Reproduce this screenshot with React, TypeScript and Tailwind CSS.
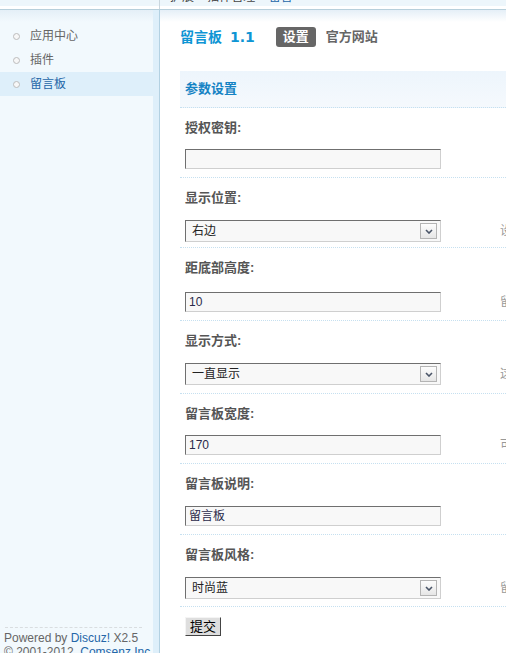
const SIDE = [
  { name: '应用中心', active: false },
  { name: '插件', active: false },
  { name: '留言板', active: true },
]

const ROWS = [
  { label: '授权密钥:', kind: 'input', value: '', h: 'h-[70px]', mt: 'mt-[2px]', tip: '' },
  { label: '显示位置:', kind: 'select', value: '右边', h: 'h-[70px]', mt: 'mt-[3px]', tip: '设置留言板在页面中的位置' },
  { label: '距底部高度:', kind: 'input', value: '10', h: 'h-[73px]', mt: 'mt-[5px]', tip: '留言板距离页面底部的高度' },
  { label: '显示方式:', kind: 'select', value: '一直显示', h: 'h-[73px]', mt: 'mt-[3px]', tip: '这里设置留言板的显示方式' },
  { label: '留言板宽度:', kind: 'input', value: '170', h: 'h-[70px]', mt: 'mt-[2px]', tip: '可以设置留言板宽度' },
  { label: '留言板说明:', kind: 'input', value: '留言板', h: 'h-[71px]', mt: 'mt-[3px]', tip: '' },
  { label: '留言板风格:', kind: 'select', value: '时尚蓝', h: 'h-[72px]', mt: 'mt-[3px]', tip: '留言板风格' },
]

function FakeSelect({ value }: { value: string }) {
  return (
    <div className="relative w-[256px] h-[22px] bg-[#f8f8f8] border border-t-[#6f6f6f] border-l-[#6f6f6f] border-b-[#cfcfcf] border-r-[#cfcfcf] flex items-center pl-[6px] text-[12px] text-[#222]">
      {value}
      {/* dropdown arrow */}
      <div className="absolute right-[3px] top-[2px] w-[17px] h-[16px] border border-[#b4b4b4] bg-[linear-gradient(#fdfdfd,#e6e6e6)] flex items-center justify-center">
        <svg width="8" height="5" viewBox="0 0 8 5"><path d="M1 1 L4 4 L7 1" stroke="#4a5568" strokeWidth="1.6" fill="none" /></svg>
      </div>
    </div>
  )
}

function FakeInput({ value }: { value: string }) {
  return (
    <div className="w-[256px] h-[20px] bg-[#f8f8f8] border border-t-[#6f6f6f] border-l-[#6f6f6f] border-b-[#cfcfcf] border-r-[#cfcfcf] flex items-center pl-[3px] text-[12px] text-[#2a2a4a]">
      {value}
    </div>
  )
}

export default function App() {
  return (
    <div className="w-[506px] h-[653px] overflow-hidden bg-white font-['Liberation_Sans','Noto_Sans_CJK_SC',sans-serif]">
      {/* top bar */}
      <div className="relative h-[10px] border-b border-[#b6cfdb] bg-[linear-gradient(#edf6fb_0,#edf6fb_6px,#fff_6px)] overflow-hidden">
        <div className="absolute left-[159px] top-0 h-full border-l border-[#c9d6de]" />
        <div className="absolute left-[170px] -top-[12px] text-[12px] text-[#444] whitespace-nowrap">
          扩展 » 插件管理 » <span className="text-[#2366a8]">留言</span>
        </div>
      </div>

      <div className="flex h-[643px]">
        {/* sidebar */}
        <div className="flex w-[160px] shrink-0">
          <div className="w-[153px] bg-[linear-gradient(#e4eff7,#f2f9fd_12px)] pt-[14px] flex flex-col">
            {SIDE.map(s => (
              <div key={s.name} className={`h-6 shrink-0 flex items-center ${s.active ? 'bg-[#deeffa]' : ''}`}>
                <span className="ml-[13px] w-[7px] h-[7px] rounded-full border border-[#bcbcbc] bg-[#f7f7f7]" />
                <span className={`ml-[10px] text-[12px] ${s.active ? 'text-[#2366a8]' : 'text-[#666]'}`}>{s.name}</span>
              </div>
            ))}
            <div className="shrink-0 mt-[531px] mx-[5px] border-t border-dashed border-[#d9dde0] w-[137px]" />
            <div className="shrink-0 pl-[4px] pt-[3px] text-[12px] leading-[14px] text-[#666] whitespace-nowrap">
              Powered by <span className="text-[#2366a8]">Discuz!</span> X2.5
              <br />© 2001-2012, <span className="text-[#2366a8]">Comsenz Inc.</span>
            </div>
          </div>
          <div className="w-[6px] bg-[#deeffa]" />
          <div className="w-px bg-[#b3d1e2]" />
        </div>

        {/* main */}
        <div className="flex-1 bg-[linear-gradient(#e5eff7,#fff_12px)] pl-[20px]">
          <div className="pt-[17px] h-[37px] flex items-center">
            <span className="text-[14px] font-bold text-[#0e95d4]">留言板</span>
            <span className="ml-[8px] text-[14px] font-bold text-[#0e95d4] font-['DejaVu_Sans',sans-serif]">1.1</span>
            <span className="ml-[21px] h-[20px] px-[7px] rounded-[3px] bg-[#666] text-white text-[13px] font-bold flex items-center">设置</span>
            <span className="ml-[10px] text-[13px] font-bold text-[#666]">官方网站</span>
          </div>

          <div className="mt-[24px] h-[37px] bg-[linear-gradient(#edf5fc,#f5f9fd)] border-b border-dotted border-[#c6e0f0] flex items-center pl-[5px]">
            <span className="text-[13px] font-bold text-[#1583c4]">参数设置</span>
          </div>

          {ROWS.map(r => (
            <div key={r.label} className={`${r.h} border-b border-dotted border-[#c6e0f0] pl-[5px]`}>
              <div className="h-[39px] flex items-center text-[13px] font-bold text-[#555]">{r.label}</div>
              <div className={`${r.mt} flex items-center`}>
                {r.kind === 'select' ? <FakeSelect value={r.value} /> : <FakeInput value={r.value} />}
                <span className="ml-[59px] text-[12px] text-[#999] whitespace-nowrap">{r.tip}</span>
              </div>
            </div>
          ))}

          <div className="pl-[5px] mt-[10px]">
            <button className="w-[36px] h-[19px] bg-[#dedede] border border-t-[#f4f4f4] border-l-[#f4f4f4] border-b-[#444] border-r-[#444] text-[13px] text-black leading-none flex items-center justify-center">
              提交
            </button>
          </div>
        </div>
      </div>
    </div>
  )
}
